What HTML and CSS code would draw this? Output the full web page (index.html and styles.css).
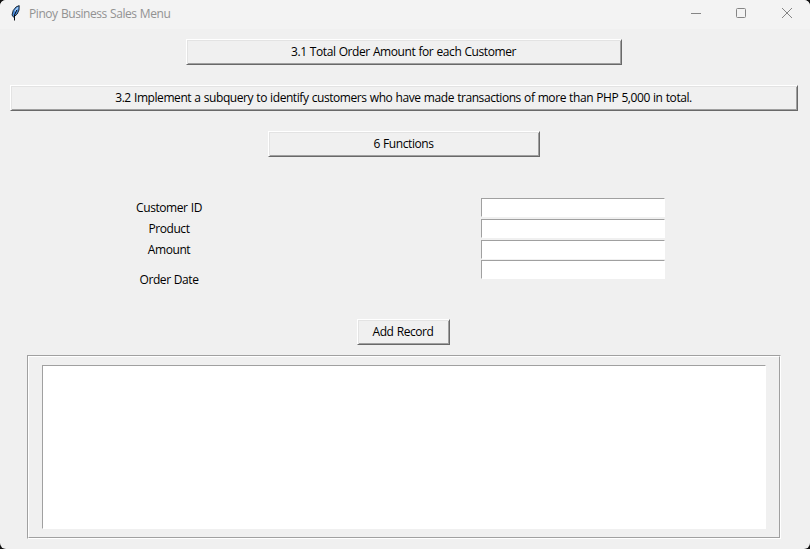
FILE: index.html
```html
<!DOCTYPE html>
<html lang="en">
<head>
<meta charset="utf-8">
<title>Pinoy Business Sales Menu</title>
<link rel="stylesheet" href="styles.css">
</head>
<body>
<div class="window">
  <header class="titlebar">
    <svg class="feather" width="10" height="16" viewBox="0 0 10 16">
      <path d="M9.2.6 6 2 3.2 5.5 2 10l1.6 2.2L7.2 9l1.8-4z" fill="#4b8ee0" stroke="#101820" stroke-width=".9"/>
      <path d="M7.9 2.3 5 6.5" stroke="#a9d1fa" stroke-width="1.4"/>
      <path d="M6.8 5 4.5 10v5.5" fill="none" stroke="#080c12" stroke-width="1"/>
    </svg>
    <h1 class="title">Pinoy Business Sales Menu</h1>
    <svg class="controls" width="104" height="12" viewBox="0 0 104 12" fill="none" stroke="#858585">
      <path d="M1 6.5h10"/>
      <rect x="46.5" y="1.5" width="9" height="9" rx="1"/>
      <path d="m92 1 10 10M102 1 92 11"/>
    </svg>
  </header>
  <main class="content">
    <button class="btn btn-total"><span>3.1 Total Order Amount for each Customer</span></button>
    <button class="btn btn-subquery"><span>3.2 Implement a subquery to identify customers who have made transactions of more than PHP 5,000 in total.</span></button>
    <button class="btn btn-functions"><span>6 Functions</span></button>
    <form class="form">
      <div class="labels">
        <label for="customer">Customer ID</label>
        <label for="product">Product</label>
        <label for="amount">Amount</label>
        <label for="date" class="date-label">Order Date</label>
      </div>
      <div class="fields">
        <input id="customer"><input id="product"><input id="amount"><input id="date" class="date-field">
      </div>
    </form>
    <button class="btn btn-add"><span>Add Record</span></button>
    <section class="frame"><div class="frame-inner"><div class="output"></div></div></section>
  </main>
</div>
</body>
</html>
```
FILE: styles.css
```css
* { box-sizing: border-box; }
body { margin: 0; background: #111; font: 12px/16px "Open Sans", "Noto Sans", sans-serif; color: #000; }
.window { width: 810px; height: 549px; background: #f0f0f0; border-radius: 6px; overflow: hidden; }
.titlebar { height: 29px; background: #f3f3f3; display: flex; align-items: flex-start; padding: 5px 16px 0 10px; }
.feather { width: 10px; height: 16px; }
.title { margin: 1px 0 0 9px; font-size: 12px; font-weight: 400; line-height: 16px; color: #929292; letter-spacing: -0.43px; word-spacing: 0.5px; white-space: nowrap; }
.controls { margin: 2px 0 0 auto; }
.content { display: flex; flex-direction: column; align-items: flex-start; padding-top: 10px; }
.btn { height: 26px; margin: 0 0 20px; padding: 0 1px 0 0; background: #f0f0f0; font: inherit; color: #000; letter-spacing: -0.43px; word-spacing: 0.5px; white-space: nowrap;
  border: 1px solid; border-color: #fff #696969 #696969 #fff; border-radius: 0; box-shadow: inset 1px 1px #e3e3e3, inset -1px -1px #a0a0a0; }
.btn-total { width: 436px; margin-left: 186px; }
.btn-subquery { width: 788px; margin-left: 10px; }
.btn-functions { width: 272px; margin-left: 268px; }
.btn-add { width: 93px; margin: 0 0 10px 357px; }
.form { display: flex; height: 121px; margin-top: 21px; }
.labels { width: 338px; display: flex; flex-direction: column; align-items: center; gap: 5px; padding-top: 2px; letter-spacing: -0.43px; word-spacing: 0.5px; }
.date-label { margin-top: 9px; }
.fields { display: flex; flex-direction: column; gap: 2px; margin-left: 143px; }
.fields input { width: 184px; height: 19px; padding: 0; background: #fff; border: 1px solid; border-color: #a0a0a0 #fff #fff #a0a0a0; border-radius: 0; }
.fields .date-field { margin-top: -1px; }
.frame { margin-left: 27px; width: 754px; height: 184px; border: 1px solid; border-color: #a0a0a0 #fff #fff #a0a0a0; }
.frame-inner { height: 182px; padding: 8px 13px; border: 1px solid; border-color: #fff #a0a0a0 #a0a0a0 #fff; }
.output { width: 724px; height: 164px; background: #fff; border: 1px solid; border-color: #a0a0a0 #fff #fff #a0a0a0; }
```
